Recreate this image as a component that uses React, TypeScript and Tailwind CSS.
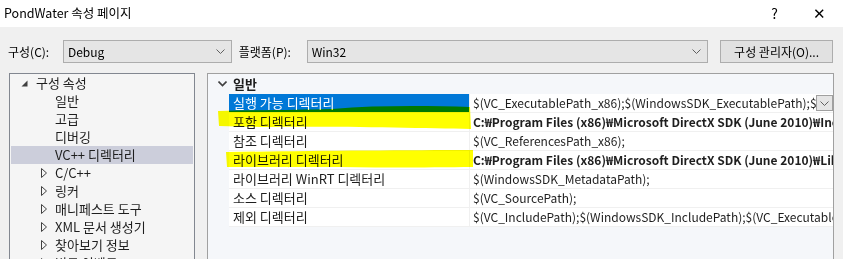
import React from 'react';

const FONT = { fontFamily: '"Noto Sans CJK KR", "Noto Sans", sans-serif' };

function Chevron({ className = '' }: { className?: string }) {
  return (
    <svg width="9" height="5" viewBox="0 0 9 5" className={className}>
      <path d="M0.5 0.5 L4.5 4.5 L8.5 0.5" fill="none" stroke="#606060" strokeWidth="1" />
    </svg>
  );
}

function Select({ value, width }: { value: string; width: string }) {
  return (
    <div className={`flex h-[23px] items-center justify-between border border-[#adadad] bg-[#e5e5e5] pl-[4px] pr-[6px] ${width}`}>
      <span className="text-[12px] text-black">{value}</span>
      <Chevron />
    </div>
  );
}

const TREE = [
  { label: '구성 속성', kind: 'root' },
  { label: '일반', kind: 'leaf' },
  { label: '고급', kind: 'leaf' },
  { label: '디버깅', kind: 'leaf' },
  { label: 'VC++ 디렉터리', kind: 'leaf', selected: true },
  { label: 'C/C++', kind: 'node' },
  { label: '링커', kind: 'node' },
  { label: '매니페스트 도구', kind: 'node' },
  { label: 'XML 문서 생성기', kind: 'node' },
  { label: '찾아보기 정보', kind: 'node' },
  { label: '빌드 이벤트', kind: 'node' },
];

const PROPS = [
  { name: '실행 가능 디렉터리', value: '$(VC_ExecutablePath_x86);$(WindowsSDK_ExecutablePath);$(VS_ExecutablePath);$(MSBuild_ExecutablePath)', selected: true },
  { name: '포함 디렉터리', value: 'C:₩Program Files (x86)₩Microsoft DirectX SDK (June 2010)₩Include;$(IncludePath)', bold: true },
  { name: '참조 디렉터리', value: '$(VC_ReferencesPath_x86);' },
  { name: '라이브러리 디렉터리', value: 'C:₩Program Files (x86)₩Microsoft DirectX SDK (June 2010)₩Lib₩x86;$(LibraryPath)', bold: true },
  { name: '라이브러리 WinRT 디렉터리', value: '$(WindowsSDK_MetadataPath);' },
  { name: '소스 디렉터리', value: '$(VC_SourcePath);' },
  { name: '제외 디렉터리', value: '$(VC_IncludePath);$(WindowsSDK_IncludePath);$(VC_ExecutablePath_x86);$(VC_LibraryPath_x86)' },
];

function TreeRow({ item }: { item: (typeof TREE)[number] }) {
  return (
    <div className={`flex h-[18px] items-center whitespace-nowrap text-[13px] text-[#1e1e1e] ${item.selected ? 'bg-[#cccedb]' : ''}`}>
      {item.kind === 'root' && (
        <>
          <svg width="7" height="7" viewBox="0 0 7 7" className="ml-[10px] mr-[8px]">
            <path d="M6.5 0.5 L6.5 6.5 L0.5 6.5 Z" fill="#404040" />
          </svg>
          <span>{item.label}</span>
        </>
      )}
      {item.kind === 'node' && (
        <>
          <svg width="6" height="10" viewBox="0 0 6 10" className="ml-[30px] mr-[8px]">
            <path d="M0.5 0.5 L5.5 5 L0.5 9.5 Z" fill="none" stroke="#404040" strokeWidth="1" />
          </svg>
          <span>{item.label}</span>
        </>
      )}
      {item.kind === 'leaf' && <span className="ml-[44px]">{item.label}</span>}
    </div>
  );
}

export default function App() {
  return (
    <div className="relative h-[259px] w-[843px] overflow-hidden bg-[#f0f0f0]" style={FONT}>
      {/* title bar */}
      <div className="flex h-[27px] items-center justify-between bg-white pl-[4px] pr-[17px] text-[12.5px] text-black">
        <span>PondWater 속성 페이지</span>
        <div className="flex items-center gap-[35px] text-[14px]">
          <span>?</span>
          <span className="text-[15px] font-light">✕</span>
        </div>
      </div>

      {/* config bar */}
      <div className="flex items-center pl-[8px] pr-[10px] pt-[13px] text-[12px] text-black">
        <span className="w-[55px]">구성(C):</span>
        <Select value="Debug" width="w-[169px]" />
        <span className="ml-[7px] w-[68px]">플랫폼(P):</span>
        <Select value="Win32" width="w-[402px]" />
        <div className="ml-[12px] flex h-[23px] w-[113px] items-center justify-center border border-[#adadad] bg-[#e1e1e1]">
          구성 관리자(O)...
        </div>
      </div>

      {/* panels */}
      <div className="mt-[10px] flex pl-[9px]">
        <div className="h-[200px] w-[186px] overflow-hidden border border-[#828790] bg-[#f5f5f5] px-[1px]">
          {TREE.map((t) => (
            <TreeRow key={t.label} item={t} />
          ))}
        </div>

        <div className="ml-[12px] h-[200px] w-[627px] overflow-hidden border border-[#a0a0a0] bg-[#f5f7fa]">
          <div className="flex h-[20px] items-center text-[13px] font-bold text-[#1e1e1e]">
            <svg width="9" height="6" viewBox="0 0 9 6" className="ml-[10px] mr-[6px]">
              <path d="M0.5 0.5 L4.5 4.5 L8.5 0.5" fill="none" stroke="#404040" strokeWidth="1.6" />
            </svg>
            <span>일반</span>
          </div>
          <div className="pl-[21px]">
            {PROPS.map((p) => (
              <div key={p.name} className="flex h-[19px] border-b border-[#f0f0f0] bg-white text-[13px]">
                <div
                  className={`flex w-[240px] shrink-0 items-center whitespace-nowrap pl-[4px] ${p.selected ? 'bg-[#0078d7] text-white' : 'text-[#1e1e1e]'}`}
                >
                  {p.name}
                </div>
                <div className="relative flex min-w-0 flex-1 items-center overflow-hidden whitespace-nowrap border-l border-[#f0f0f0] pl-[3px] text-[12px] text-[#1e1e1e]">
                  <span className={p.bold ? 'font-bold' : ''}>{p.value}</span>
                  {p.selected && (
                    <div className="absolute right-0 top-[1px] flex h-[16px] w-[17px] items-center justify-center border border-[#a0a0a0] bg-[#e5e5e5]">
                      <Chevron />
                    </div>
                  )}
                </div>
              </div>
            ))}
          </div>
        </div>
      </div>

      {/* highlighter marks */}
      <svg className="pointer-events-none absolute left-0 top-0 mix-blend-multiply" width="843" height="259">
        <path
          d="M218 111 C260 110 300 110 332 109 C380 105 430 106 470 107 L471 129 C420 128 330 126 260 127 L219 126 Z"
          fill="#ffff00"
        />
        <path d="M226 152 C300 151 400 150 473 150 L473 167 C400 168 300 167 227 167 Z" fill="#ffff00" />
      </svg>
    </div>
  );
}
